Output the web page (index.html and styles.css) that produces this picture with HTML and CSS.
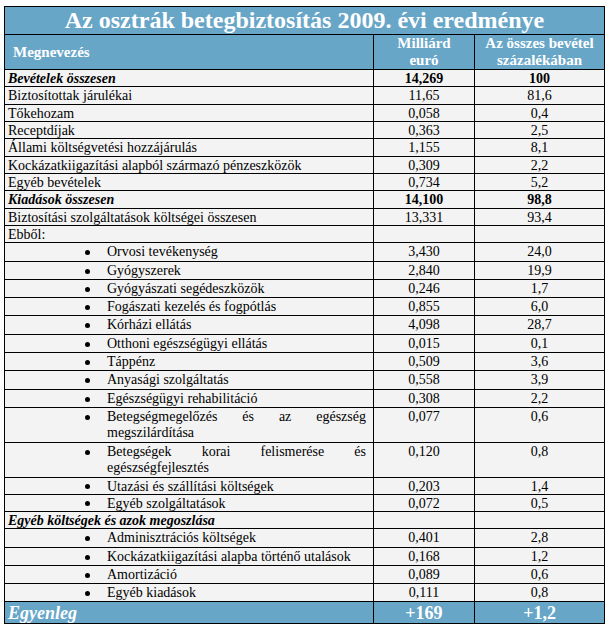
FILE: index.html
```html
<!DOCTYPE html>
<html lang="hu">
<head>
<meta charset="utf-8">
<title>Az osztrák betegbiztosítás 2009. évi eredménye</title>
<link rel="stylesheet" href="styles.css">
</head>
<body>
<div class="page">
<table class="report">
  <colgroup>
    <col class="c-name">
    <col class="c-eur">
    <col class="c-pct">
  </colgroup>
  <thead>
    <tr class="title"><th colspan="3">Az osztrák betegbiztosítás 2009. évi eredménye</th></tr>
    <tr class="head">
      <th class="h-name">Megnevezés</th>
      <th>Milliárd<br>euró</th>
      <th>Az összes bevétel<br>százalékában</th>
    </tr>
  </thead>
  <tbody>
    <tr class="total"><td class="label">Bevételek összesen</td><td class="num">14,269</td><td class="num">100</td></tr>
    <tr><td>Biztosítottak járulékai</td><td class="num">11,65</td><td class="num">81,6</td></tr>
    <tr><td>Tőkehozam</td><td class="num">0,058</td><td class="num">0,4</td></tr>
    <tr><td>Receptdíjak</td><td class="num">0,363</td><td class="num">2,5</td></tr>
    <tr><td>Állami költségvetési hozzájárulás</td><td class="num">1,155</td><td class="num">8,1</td></tr>
    <tr><td>Kockázatkiigazítási alapból származó pénzeszközök</td><td class="num">0,309</td><td class="num">2,2</td></tr>
    <tr><td>Egyéb bevételek</td><td class="num">0,734</td><td class="num">5,2</td></tr>
    <tr class="total"><td class="label">Kiadások összesen</td><td class="num">14,100</td><td class="num">98,8</td></tr>
    <tr><td>Biztosítási szolgáltatások költségei összesen</td><td class="num">13,331</td><td class="num">93,4</td></tr>
    <tr><td>Ebből:</td><td></td><td></td></tr>
    <tr class="sub"><td><div class="bul"><span class="dot"></span><span class="txt">Orvosi tevékenység</span></div></td><td class="num">3,430</td><td class="num">24,0</td></tr>
    <tr class="sub"><td><div class="bul"><span class="dot"></span><span class="txt">Gyógyszerek</span></div></td><td class="num">2,840</td><td class="num">19,9</td></tr>
    <tr class="sub"><td><div class="bul"><span class="dot"></span><span class="txt">Gyógyászati segédeszközök</span></div></td><td class="num">0,246</td><td class="num">1,7</td></tr>
    <tr class="sub"><td><div class="bul"><span class="dot"></span><span class="txt">Fogászati kezelés és fogpótlás</span></div></td><td class="num">0,855</td><td class="num">6,0</td></tr>
    <tr class="sub"><td><div class="bul"><span class="dot"></span><span class="txt">Kórházi ellátás</span></div></td><td class="num">4,098</td><td class="num">28,7</td></tr>
    <tr class="sub"><td><div class="bul"><span class="dot"></span><span class="txt">Otthoni egészségügyi ellátás</span></div></td><td class="num">0,015</td><td class="num">0,1</td></tr>
    <tr class="sub"><td><div class="bul"><span class="dot"></span><span class="txt">Táppénz</span></div></td><td class="num">0,509</td><td class="num">3,6</td></tr>
    <tr class="sub"><td><div class="bul"><span class="dot"></span><span class="txt">Anyasági szolgáltatás</span></div></td><td class="num">0,558</td><td class="num">3,9</td></tr>
    <tr class="sub"><td><div class="bul"><span class="dot"></span><span class="txt">Egészségügyi rehabilitáció</span></div></td><td class="num">0,308</td><td class="num">2,2</td></tr>
    <tr class="sub two"><td><div class="bul"><span class="dot"></span><span class="txt">Betegségmegelőzés és az egészség megszilárdítása</span></div></td><td class="num">0,077</td><td class="num">0,6</td></tr>
    <tr class="sub two"><td><div class="bul"><span class="dot"></span><span class="txt">Betegségek korai felismerése és egészségfejlesztés</span></div></td><td class="num">0,120</td><td class="num">0,8</td></tr>
    <tr class="sub tight"><td><div class="bul"><span class="dot"></span><span class="txt">Utazási és szállítási költségek</span></div></td><td class="num">0,203</td><td class="num">1,4</td></tr>
    <tr class="sub tight"><td><div class="bul"><span class="dot"></span><span class="txt">Egyéb szolgáltatások</span></div></td><td class="num">0,072</td><td class="num">0,5</td></tr>
    <tr class="total"><td class="label">Egyéb költségek és azok megoszlása</td><td></td><td></td></tr>
    <tr class="sub"><td><div class="bul"><span class="dot"></span><span class="txt">Adminisztrációs költségek</span></div></td><td class="num">0,401</td><td class="num">2,8</td></tr>
    <tr class="sub"><td><div class="bul"><span class="dot"></span><span class="txt">Kockázatkiigazítási alapba történő utalások</span></div></td><td class="num">0,168</td><td class="num">1,2</td></tr>
    <tr class="sub"><td><div class="bul"><span class="dot"></span><span class="txt">Amortizáció</span></div></td><td class="num">0,089</td><td class="num">0,6</td></tr>
    <tr class="sub"><td><div class="bul"><span class="dot"></span><span class="txt">Egyéb kiadások</span></div></td><td class="num">0,111</td><td class="num">0,8</td></tr>
  </tbody>
  <tfoot>
    <tr class="balance"><td class="label">Egyenleg</td><td class="num">+169</td><td class="num">+1,2</td></tr>
  </tfoot>
</table>
</div>
</body>
</html>
```

FILE: styles.css
```css
html, body {
  margin: 0;
  padding: 0;
  background: #ffffff;
}

body {
  font-family: "Liberation Serif", "Times New Roman", serif;
  color: #000000;
}

.page {
  padding: 6px 0 0 4px;
}

.report {
  border-collapse: collapse;
  table-layout: fixed;
  width: 600px;
  font-size: 14px;
  line-height: 15.33px;
  background: #f3f3f3;
}

.c-name { width: 369px; }
.c-eur { width: 101px; }
.c-pct { width: 130px; }

.report th,
.report td {
  border: 1px solid #000000;
  padding: 1px 3px 0;
  vertical-align: top;
  text-align: left;
}

.title th {
  background: #68a6c8;
  color: #ffffff;
  font-size: 24px;
  line-height: 27px;
  font-weight: bold;
  text-align: center;
  padding: 0;
}

.head th {
  background: #68a6c8;
  color: #ffffff;
  font-size: 15px;
  font-weight: bold;
  line-height: 17px;
  padding: 0 3px;
  text-align: center;
  vertical-align: middle;
}

.head .h-name {
  text-align: left;
  padding-left: 8px;
}

.report td.num {
  text-align: center;
}

.total td {
  font-weight: bold;
}

.total td.label {
  font-style: italic;
}

.sub td {
  line-height: 16.3px;
  padding-top: 1px;
  padding-bottom: 0;
}

.sub.two td {
  line-height: 16px;
  padding-bottom: 1px;
}

.sub.tight td {
  line-height: 15px;
}

.report .sub td:first-child {
  padding-left: 80px;
  padding-right: 7px;
}

.bul {
  display: flex;
  align-items: flex-start;
}

.dot {
  flex: none;
  width: 5px;
  height: 5px;
  border-radius: 50%;
  background: #000000;
  margin-top: 6px;
  margin-right: 17px;
}

.sub.tight .dot {
  margin-top: 5px;
}

.txt {
  flex: 1;
  text-align: justify;
}

.balance td {
  background: #68a6c8;
  color: #ffffff;
  font-weight: bold;
  font-size: 18px;
  line-height: 20px;
  padding: 1px 3px 0;
}

.balance td.label {
  font-style: italic;
}
```
